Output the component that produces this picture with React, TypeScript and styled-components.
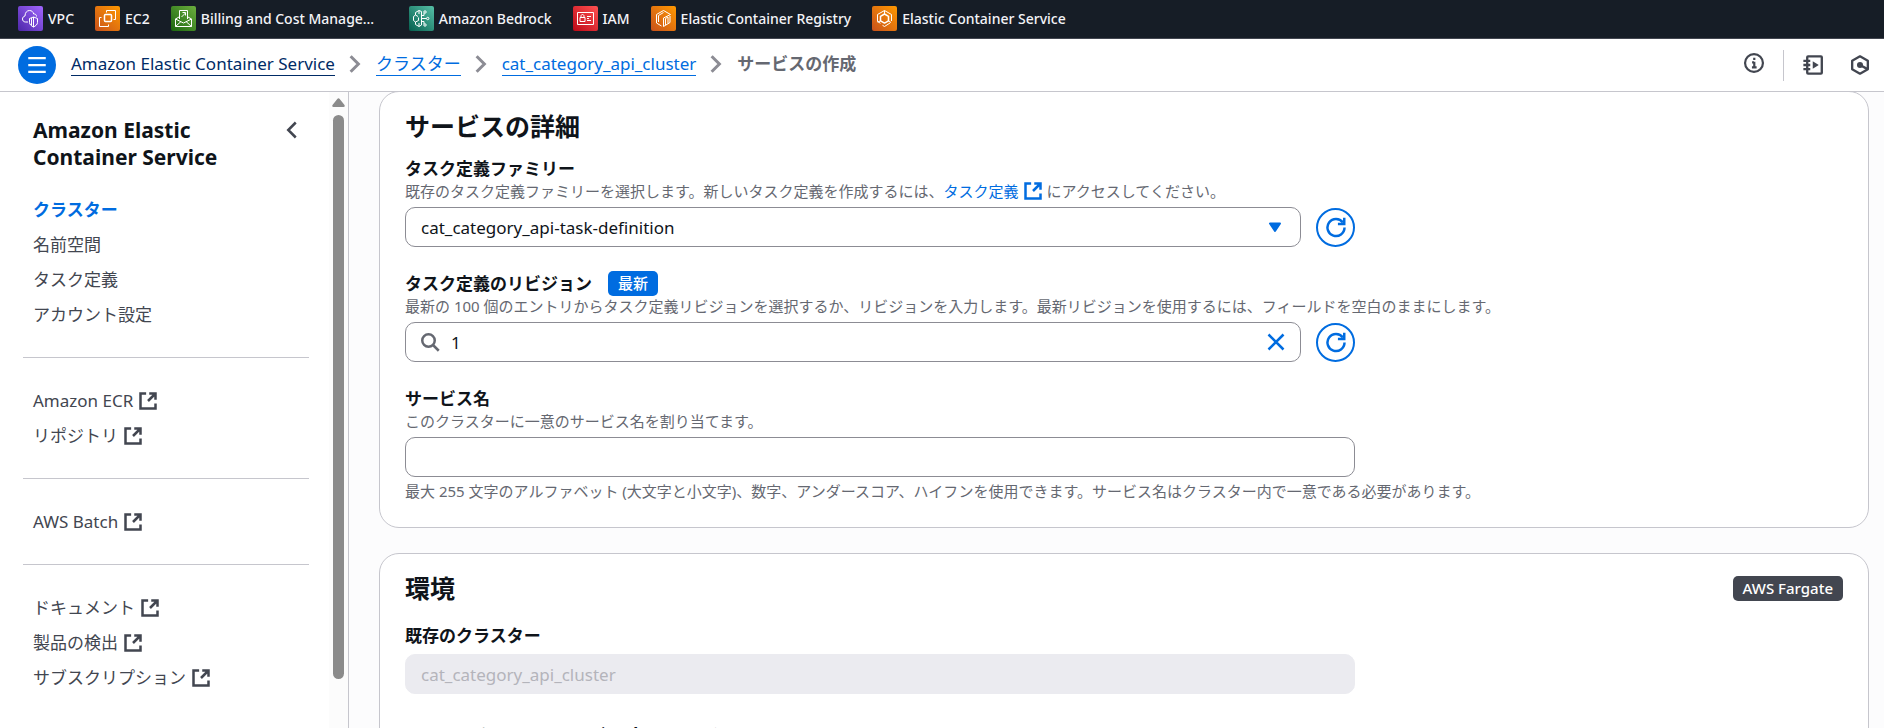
import React, { ReactNode, useState } from 'react';
import styled, { createGlobalStyle } from 'styled-components';

const blue = '#006ce0';
const ink = '#0f141a';
const slate = '#424650';
const muted = '#656871';
const line = '#c6c6cd';
const fieldBorder = '#8c8c94';

const GlobalStyle = createGlobalStyle`
  *, *::before, *::after { box-sizing: border-box; }
  body {
    margin: 0;
    background: #fcfcfd;
    color: ${ink};
    font-family: 'Noto Sans', 'Noto Sans CJK JP', sans-serif;
    font-size: 17px;
    line-height: 25px;
  }
  h1, h2, p, ul, ol { margin: 0; padding: 0; }
  ul, ol { list-style: none; }
  button, input, select { font: inherit; color: inherit; }
  svg { display: block; flex: none; }
`;

/* ---------- shell ---------- */

const Shell = styled.div`
  display: flex;
  flex-direction: column;
  height: 100vh;
  overflow: hidden;
`;

const Body = styled.div`
  display: flex;
  flex: 1;
  min-height: 0;
`;

/* ---------- favourites bar ---------- */

const FavBar = styled.nav`
  flex: none;
  height: 39px;
  padding: 0 18px;
  background: #161d26;
  border-bottom: 1px solid ${slate};
`;

const FavList = styled.ul`
  display: flex;
  gap: 21px;
  height: 37px;
  align-items: center;
`;

const FavLink = styled.a<{ $wide?: boolean }>`
  display: flex;
  align-items: center;
  gap: 5px;
  min-width: ${(p) => (p.$wide ? '217px' : '0')};
  color: #f3f3f7;
  font-size: 14px;
  font-weight: 500;
  line-height: 20px;
  white-space: nowrap;
  text-decoration: none;
`;

const Tile = styled.span<{ $from: string; $to: string }>`
  display: flex;
  align-items: center;
  justify-content: center;
  width: 25px;
  height: 25px;
  border-radius: 2px;
  background: linear-gradient(45deg, ${(p) => p.$from}, ${(p) => p.$to});
`;

/* ---------- breadcrumb bar ---------- */

const Header = styled.header`
  position: relative;
  z-index: 1;
  flex: none;
  display: flex;
  align-items: center;
  height: 53px;
  padding: 0 13px 0 18px;
  background: #fff;
  border-bottom: 1px solid ${line};
`;

const MenuButton = styled.button`
  display: flex;
  align-items: center;
  justify-content: center;
  width: 38px;
  height: 38px;
  padding: 0;
  border: 0;
  border-radius: 50%;
  background: ${blue};
  color: #fff;
`;

const Crumbs = styled.ol`
  display: flex;
  align-items: center;
  margin-left: 15px;
  padding-bottom: 2px;
`;

const Crumb = styled.li`
  display: flex;
  align-items: center;
`;

const CrumbLink = styled.a<{ $dark?: boolean }>`
  color: ${(p) => (p.$dark ? '#002b66' : blue)};
  line-height: 22px;
  text-decoration: none;
  border-bottom: 1px solid currentColor;
`;

const CrumbCurrent = styled.span`
  color: ${muted};
  font-weight: 700;
  line-height: 22px;
`;

const CrumbSep = styled.span`
  display: flex;
  padding: 0 11px 0 10px;
  color: ${fieldBorder};
`;

const Tools = styled.div`
  display: flex;
  align-items: center;
  margin-left: auto;
  color: ${slate};
`;

const ToolDivider = styled.span`
  width: 1px;
  height: 31px;
  margin: 0 18px;
  background: ${line};
`;

const IconButton = styled.button`
  display: flex;
  align-items: center;
  justify-content: center;
  padding: 0;
  border: 0;
  background: none;
  color: inherit;
`;

const InfoButton = styled(IconButton)`
  padding-bottom: 4px;
`;

const ToolPair = styled.div`
  display: flex;
  gap: 25px;
`;

/* ---------- side navigation ---------- */

const Side = styled.aside`
  display: flex;
  flex: none;
  width: 349px;
  background: #fff;
  border-right: 1px solid ${line};
`;

const SideContent = styled.div`
  flex: 1;
  min-width: 0;
  padding: 25px 20px 0 23px;
`;

const SideHead = styled.div`
  display: flex;
  justify-content: space-between;
  align-items: flex-start;
  padding: 0 7px 0 10px;
`;

const SideTitle = styled.h1`
  width: 200px;
  font-size: 21px;
  font-weight: 700;
  line-height: 27px;
`;

const CloseNav = styled(IconButton)`
  height: 25px;
  color: ${slate};
`;

const NavList = styled.ul`
  display: flex;
  flex-direction: column;
  gap: 10px;
  padding: 0 10px;
`;

const NavFirst = styled(NavList)`
  margin-top: 26px;
`;

const NavDivider = styled.hr`
  height: 1px;
  margin: 30px 0;
  border: 0;
  background: ${line};
`;

const NavLink = styled.a<{ $active?: boolean }>`
  display: flex;
  align-items: center;
  gap: 5px;
  color: ${(p) => (p.$active ? blue : slate)};
  font-weight: ${(p) => (p.$active ? 700 : 400)};
  text-decoration: none;
  white-space: nowrap;
`;

const ScrollTrack = styled.div`
  display: flex;
  flex-direction: column;
  align-items: center;
  width: 19px;
  padding: 6px 0 49px;
  background: #fcfcfc;
  color: #8b8b8b;
`;

const ScrollThumb = styled.div`
  flex: 1;
  width: 11px;
  margin-top: 8px;
  border-radius: 6px;
  background: currentColor;
`;

/* ---------- main form ---------- */

const Main = styled.main`
  flex: 1;
  min-width: 0;
  padding: 0 15px 0 30px;
`;

const Card = styled.section`
  margin-bottom: 25px;
  padding: 19px 25px 26px;
  background: #fff;
  border: 1px solid ${line};
  border-radius: 20px;

  &:first-child {
    margin-top: -1px;
  }
`;

const CardHead = styled.div<{ $gap: number }>`
  display: flex;
  justify-content: space-between;
  align-items: center;
  margin-bottom: ${(p) => p.$gap}px;
`;

const CardTitle = styled.h2`
  font-size: 25px;
  font-weight: 700;
  line-height: 30px;
`;

const Fields = styled.div`
  display: flex;
  flex-direction: column;
  gap: 24px;
`;

const Field = styled.div`
  display: flex;
  flex-direction: column;
`;

const LabelRow = styled.div`
  display: flex;
  align-items: center;
  gap: 16px;
  height: 25px;
`;

const Label = styled.label`
  font-weight: 700;
`;

const Hint = styled.p`
  color: ${muted};
  font-size: 15px;
  line-height: 20px;
  white-space: nowrap;
`;

const Help = styled(Hint)`
  margin-top: 4px;
`;

const HintLink = styled.a`
  color: ${blue};
  text-decoration: none;

  svg {
    display: inline-block;
    margin: 0 4px;
    vertical-align: top;
  }
`;

const Badge = styled.span<{ $tone: 'blue' | 'dark' }>`
  padding: 0 10px;
  border-radius: 5px;
  background: ${(p) => (p.$tone === 'blue' ? blue : slate)};
  color: #fff;
  font-size: 15px;
  font-weight: 500;
  line-height: 25px;
  white-space: nowrap;
`;

const Columns = styled.div`
  display: grid;
  grid-template-columns: repeat(12, minmax(0, 1fr));
  column-gap: 25px;
  margin-top: 6px;
`;

const Control = styled.div`
  grid-column: span 8;
  display: flex;
  align-items: center;
  gap: 15px;
`;

const Box = styled.div`
  position: relative;
  display: flex;
  flex: 1;
  align-items: center;
  height: 40px;
  background: #fff;
  border: 1px solid ${fieldBorder};
  border-radius: 10px;
`;

const Select = styled.select`
  appearance: none;
  width: 100%;
  height: 38px;
  padding: 0 45px 0 15px;
  border: 0;
  border-radius: 10px;
  background: none;
`;

const Caret = styled.span`
  position: absolute;
  right: 18px;
  color: ${blue};
  pointer-events: none;
`;

const SearchIcon = styled.span`
  margin-left: 14px;
  color: ${muted};
`;

const BareInput = styled.input`
  flex: 1;
  min-width: 0;
  height: 38px;
  padding: 0 11px;
  border: 0;
  background: none;
  outline: none;
`;

const ClearButton = styled(IconButton)`
  margin-right: 14px;
  color: ${blue};
`;

const TextInput = styled.input`
  flex: 1;
  min-width: 0;
  height: 40px;
  padding: 0 15px;
  border: 1px solid ${fieldBorder};
  border-radius: 10px;
  background: #fff;

  &:disabled {
    border-color: #ebebf0;
    background: #ebebf0;
    color: #b4b4bb;
  }
`;

const RoundButton = styled.button`
  display: flex;
  align-items: center;
  justify-content: center;
  width: 39px;
  height: 39px;
  padding: 0;
  border: 2px solid ${blue};
  border-radius: 50%;
  background: #fff;
  color: ${blue};
`;

const Expander = styled.button`
  display: flex;
  align-items: center;
  gap: 8px;
  padding: 0;
  border: 0;
  background: none;
  color: ${ink};
  font-size: 20px;
  font-weight: 700;
  line-height: 40px;
`;

/* ---------- icons ---------- */

const Glyph = ({ size = 20, width = 2, children }: { size?: number; width?: number; children: ReactNode }) => (
  <svg width={size} height={size} viewBox="0 0 16 16" fill="none" stroke="currentColor" strokeWidth={width} aria-hidden="true">
    {children}
  </svg>
);

const ExternalIcon = () => (
  <Glyph>
    <path d="M6.5 2H2v12h12v-4" />
    <path d="M9 2h5v5M8 8l5.6-5.6" />
  </Glyph>
);

const RefreshIcon = () => (
  <Glyph size={22} width={1.8}>
    <path d="M14.2 8.4A6.200 6.200 0 1 1 13 4.700" />
    <path d="M14 1.200v4.600H9.400" />
  </Glyph>
);

const CloseIcon = () => (
  <Glyph width={2}>
    <path d="M2 2l12 12M14 2L2 14" />
  </Glyph>
);

const ServiceIcon = ({ children }: { children: ReactNode }) => (
  <svg width="25" height="25" viewBox="0 0 25 25" fill="none" stroke="#fff" strokeWidth="1" strokeLinejoin="round" aria-hidden="true">
    {children}
  </svg>
);

/* ---------- data ---------- */

interface Favourite {
  name: string;
  from: string;
  to: string;
  wide?: boolean;
  art: ReactNode;
}

const favourites: Favourite[] = [
  {
    name: 'VPC',
    from: '#4d27a8',
    to: '#a166ff',
    art: (
      <>
        <path d="M10 16H7.500C5.500 16 4.500 14.500 4.500 13c0-1.600 1-2.600 2.500-3C7 6.500 9 4.500 11.500 4.500c2.300 0 3.800 1.500 4.200 3.500 1.500-.3 2.800.6 2.800 2.500" />
        <path d="M15.500 11l4 1.500v4c0 2-2 3.500-4 4.500-2-1-4-2.500-4-4.500v-4zM15.500 11v10M13.500 12v7.500" />
      </>
    ),
  },
  {
    name: 'EC2',
    from: '#c8511b',
    to: '#ff9900',
    art: (
      <>
        <rect x="9.500" y="8.500" width="7" height="7" rx="1" strokeWidth="1.500" />
        <path d="M11.500 6.500v-2h9v9H18.500M6.500 11.500h-2v9h9V18.500" />
      </>
    ),
  },
  {
    name: 'Billing and Cost Manage…',
    from: '#1b660f',
    to: '#6cae3e',
    wide: true,
    art: (
      <>
        <path d="M8.500 13V4.500h8V13M8 11l-3.500 2v7.500h16V13L17 11" />
        <path d="M4.500 13l8 4 8-4M4.500 20.500l5.500-5M20.500 20.500l-5.500-5" />
        <path d="M10.500 11l4-4M11.500 6.500h3v3" />
      </>
    ),
  },
  {
    name: 'Amazon Bedrock',
    from: '#055f4e',
    to: '#56c0a7',
    art: (
      <>
        <path d="M12.500 5.500L10 4.500 6.500 6.500V9L4.500 10.500v4L6.500 16v2.500l3.500 2 2.500-1.500zM6.500 9L9 10.500M6.500 16l3-1.500v-3M10 4.500V8M10 20.500V17" />
        <path d="M12.500 12.500h5M12.500 9.500H15V7M12.500 15.500H15V18" />
        <circle cx="18.700" cy="12.500" r="1.200" />
        <circle cx="16" cy="6" r="1.200" />
        <circle cx="16" cy="19" r="1.200" />
      </>
    ),
  },
  {
    name: 'IAM',
    from: '#bd0816',
    to: '#ff5252',
    art: (
      <>
        <rect x="4.500" y="6.500" width="16" height="12" />
        <rect x="7" y="11.500" width="5" height="4" />
        <path d="M8 11.500V10c0-2 3-2 3 0v1.500M14 10.500h4M14 12.500h2M14 14.500h4" />
      </>
    ),
  },
  {
    name: 'Elastic Container Registry',
    from: '#c8511b',
    to: '#ff9900',
    art: (
      <>
        <path d="M10.500 20L5.500 17V8.500l7-4 7 4L12.500 12v8.500l6.500-4V10" />
        <path d="M14.500 19v-6.500l2.500-1.500v6.500M7.500 16V9.500l5-3" />
      </>
    ),
  },
  {
    name: 'Elastic Container Service',
    from: '#c8511b',
    to: '#ff9900',
    art: (
      <>
        <path d="M19.500 15V8.500l-7-4-7 4v7l3 1.800M18 17l-5.500 3.500-2-1.200" />
        <path d="M12.500 8l4 2.300v4.500l-4 2.300-4-2.300v-4.500z" strokeWidth="1.500" />
        <path d="M12.500 8V4.500M8.500 15l-3 1M16.500 15l2.500 1.500" />
      </>
    ),
  },
];

interface NavItem {
  label: string;
  active?: boolean;
  external?: boolean;
}

const primaryNav: NavItem[] = [
  { label: 'クラスター', active: true },
  { label: '名前空間' },
  { label: 'タスク定義' },
  { label: 'アカウント設定' },
];

const externalNav: NavItem[][] = [
  [
    { label: 'Amazon ECR', external: true },
    { label: 'リポジトリ', external: true },
  ],
  [{ label: 'AWS Batch', external: true }],
  [
    { label: 'ドキュメント', external: true },
    { label: '製品の検出', external: true },
    { label: 'サブスクリプション', external: true },
  ],
];

const NavItems = ({ items }: { items: NavItem[] }) => (
  <>
    {items.map((item) => (
      <li key={item.label}>
        <NavLink href="#" $active={item.active}>
          {item.label}
          {item.external && <ExternalIcon />}
        </NavLink>
      </li>
    ))}
  </>
);

const Separator = () => (
  <CrumbSep aria-hidden="true">
    <Glyph width={2.4}>
      <path d="M4.500 1.800L10.700 8l-6.200 6.200" />
    </Glyph>
  </CrumbSep>
);

export default function App() {
  const [revision, setRevision] = useState('1');
  const [serviceName, setServiceName] = useState('');

  return (
    <Shell>
      <GlobalStyle />
      <FavBar aria-label="お気に入り">
        <FavList>
          {favourites.map((f) => (
            <li key={f.name}>
              <FavLink href="#" $wide={f.wide}>
                <Tile $from={f.from} $to={f.to}>
                  <ServiceIcon>{f.art}</ServiceIcon>
                </Tile>
                {f.name}
              </FavLink>
            </li>
          ))}
        </FavList>
      </FavBar>

      <Header>
        <MenuButton type="button" aria-label="メニュー">
          <Glyph size={20} width={1.8}>
            <path d="M1 2.500h14M1 8h14M1 13.500h14" />
          </Glyph>
        </MenuButton>
        <Crumbs>
          <Crumb>
            <CrumbLink href="#" $dark>Amazon Elastic Container Service</CrumbLink>
            <Separator />
          </Crumb>
          <Crumb>
            <CrumbLink href="#">クラスター</CrumbLink>
            <Separator />
          </Crumb>
          <Crumb>
            <CrumbLink href="#">cat_category_api_cluster</CrumbLink>
            <Separator />
          </Crumb>
          <Crumb>
            <CrumbCurrent aria-current="page">サービスの作成</CrumbCurrent>
          </Crumb>
        </Crumbs>
        <Tools>
          <InfoButton type="button" aria-label="情報">
            <Glyph size={22} width={1.6}>
              <circle cx="8" cy="8" r="6.500" />
              <path d="M8.200 7v4.600M6.600 7.500H8M6.500 11.200h3.400M8.200 4.200v1.700" />
            </Glyph>
          </InfoButton>
          <ToolDivider />
          <ToolPair>
            <IconButton type="button" aria-label="チュートリアル">
              <Glyph size={22} width={1.7}>
                <rect x="3.800" y="1.700" width="10.600" height="12.600" rx=".6" />
                <path d="M1 5h5M1 8h5M1 11h5" />
                <path d="M7.800 5.300v5.400l4.400-2.700z" fill="currentColor" stroke="none" />
              </Glyph>
            </IconButton>
            <IconButton type="button" aria-label="設定">
              <Glyph size={22} width={1.700}>
                <path d="M8 1.700l5.700 3.200v6.200L8 14.300l-5.700-3.200V4.900z" strokeLinejoin="round" />
                <circle cx="8" cy="8" r="2.200" fill="currentColor" stroke="none" />
                <path d="M8 8l5.500 3" />
              </Glyph>
            </IconButton>
          </ToolPair>
        </Tools>
      </Header>

      <Body>
        <Side>
          <SideContent>
            <SideHead>
              <SideTitle>Amazon Elastic Container Service</SideTitle>
              <CloseNav type="button" aria-label="ナビゲーションを閉じる">
                <Glyph width={2}>
                  <path d="M11 2L5 8l6 6" />
                </Glyph>
              </CloseNav>
            </SideHead>
            <NavFirst>
              <NavItems items={primaryNav} />
            </NavFirst>
            {externalNav.map((group) => (
              <React.Fragment key={group[0].label}>
                <NavDivider />
                <NavList>
                  <NavItems items={group} />
                </NavList>
              </React.Fragment>
            ))}
          </SideContent>
          <ScrollTrack aria-hidden="true">
            <svg width="13" height="9" viewBox="0 0 13 9" fill="currentColor">
              <path d="M5.300 1Q6.500-.5 7.700 1L12.500 7Q13.300 9 11.500 9H1.500Q-.3 9 .5 7z" />
            </svg>
            <ScrollThumb />
          </ScrollTrack>
        </Side>

        <Main>
          <Card>
            <CardHead $gap={15}>
              <CardTitle>サービスの詳細</CardTitle>
            </CardHead>
            <Fields>
              <Field>
                <LabelRow>
                  <Label htmlFor="family">タスク定義ファミリー</Label>
                </LabelRow>
                <Hint>
                  既存のタスク定義ファミリーを選択します。新しいタスク定義を作成するには、<HintLink href="#">タスク定義<ExternalIcon /></HintLink>にアクセスしてください。
                </Hint>
                <Columns>
                  <Control>
                    <Box>
                      <Select id="family" defaultValue="cat">
                        <option value="cat">cat_category_api-task-definition</option>
                      </Select>
                      <Caret>
                        <svg width="14" height="11" viewBox="0 0 14 11" fill="currentColor" stroke="currentColor" strokeWidth="2" strokeLinejoin="round" aria-hidden="true">
                          <path d="M2 1.500h10L7 9z" />
                        </svg>
                      </Caret>
                    </Box>
                    <RoundButton type="button" aria-label="タスク定義ファミリーを更新">
                      <RefreshIcon />
                    </RoundButton>
                  </Control>
                </Columns>
              </Field>

              <Field>
                <LabelRow>
                  <Label htmlFor="revision">タスク定義のリビジョン</Label>
                  <Badge $tone="blue">最新</Badge>
                </LabelRow>
                <Hint>
                  最新の 100 個のエントリからタスク定義リビジョンを選択するか、リビジョンを入力します。最新リビジョンを使用するには、フィールドを空白のままにします。
                </Hint>
                <Columns>
                  <Control>
                    <Box>
                      <SearchIcon>
                        <Glyph width={2}>
                          <circle cx="6.800" cy="6.800" r="5" />
                          <path d="M10.400 10.400l4.600 4.600" />
                        </Glyph>
                      </SearchIcon>
                      <BareInput id="revision" type="text" value={revision} onChange={(e) => setRevision(e.target.value)} />
                      <ClearButton type="button" aria-label="クリア" onClick={() => setRevision('')}>
                        <CloseIcon />
                      </ClearButton>
                    </Box>
                    <RoundButton type="button" aria-label="リビジョンを更新">
                      <RefreshIcon />
                    </RoundButton>
                  </Control>
                </Columns>
              </Field>

              <Field>
                <LabelRow>
                  <Label htmlFor="service-name">サービス名</Label>
                </LabelRow>
                <Hint>このクラスターに一意のサービス名を割り当てます。</Hint>
                <Columns>
                  <Control>
                    <TextInput id="service-name" type="text" value={serviceName} onChange={(e) => setServiceName(e.target.value)} />
                  </Control>
                </Columns>
                <Help>
                  最大 255 文字のアルファベット (大文字と小文字)、数字、アンダースコア、ハイフンを使用できます。サービス名はクラスター内で一意である必要があります。
                </Help>
              </Field>
            </Fields>
          </Card>

          <Card>
            <CardHead $gap={20}>
              <CardTitle>環境</CardTitle>
              <Badge $tone="dark">AWS Fargate</Badge>
            </CardHead>
            <Fields>
              <Field>
                <LabelRow>
                  <Label htmlFor="cluster">既存のクラスター</Label>
                </LabelRow>
                <Columns>
                  <Control>
                    <TextInput id="cluster" type="text" value="cat_category_api_cluster" disabled />
                  </Control>
                </Columns>
              </Field>
              <Expander type="button" aria-expanded="true">
                <svg width="14" height="11" viewBox="0 0 14 11" fill="currentColor" aria-hidden="true">
                  <path d="M1 1h12L7 10z" />
                </svg>
                コンピューティング設定 (アドバンスト)
              </Expander>
            </Fields>
          </Card>
        </Main>
      </Body>
    </Shell>
  );
}
